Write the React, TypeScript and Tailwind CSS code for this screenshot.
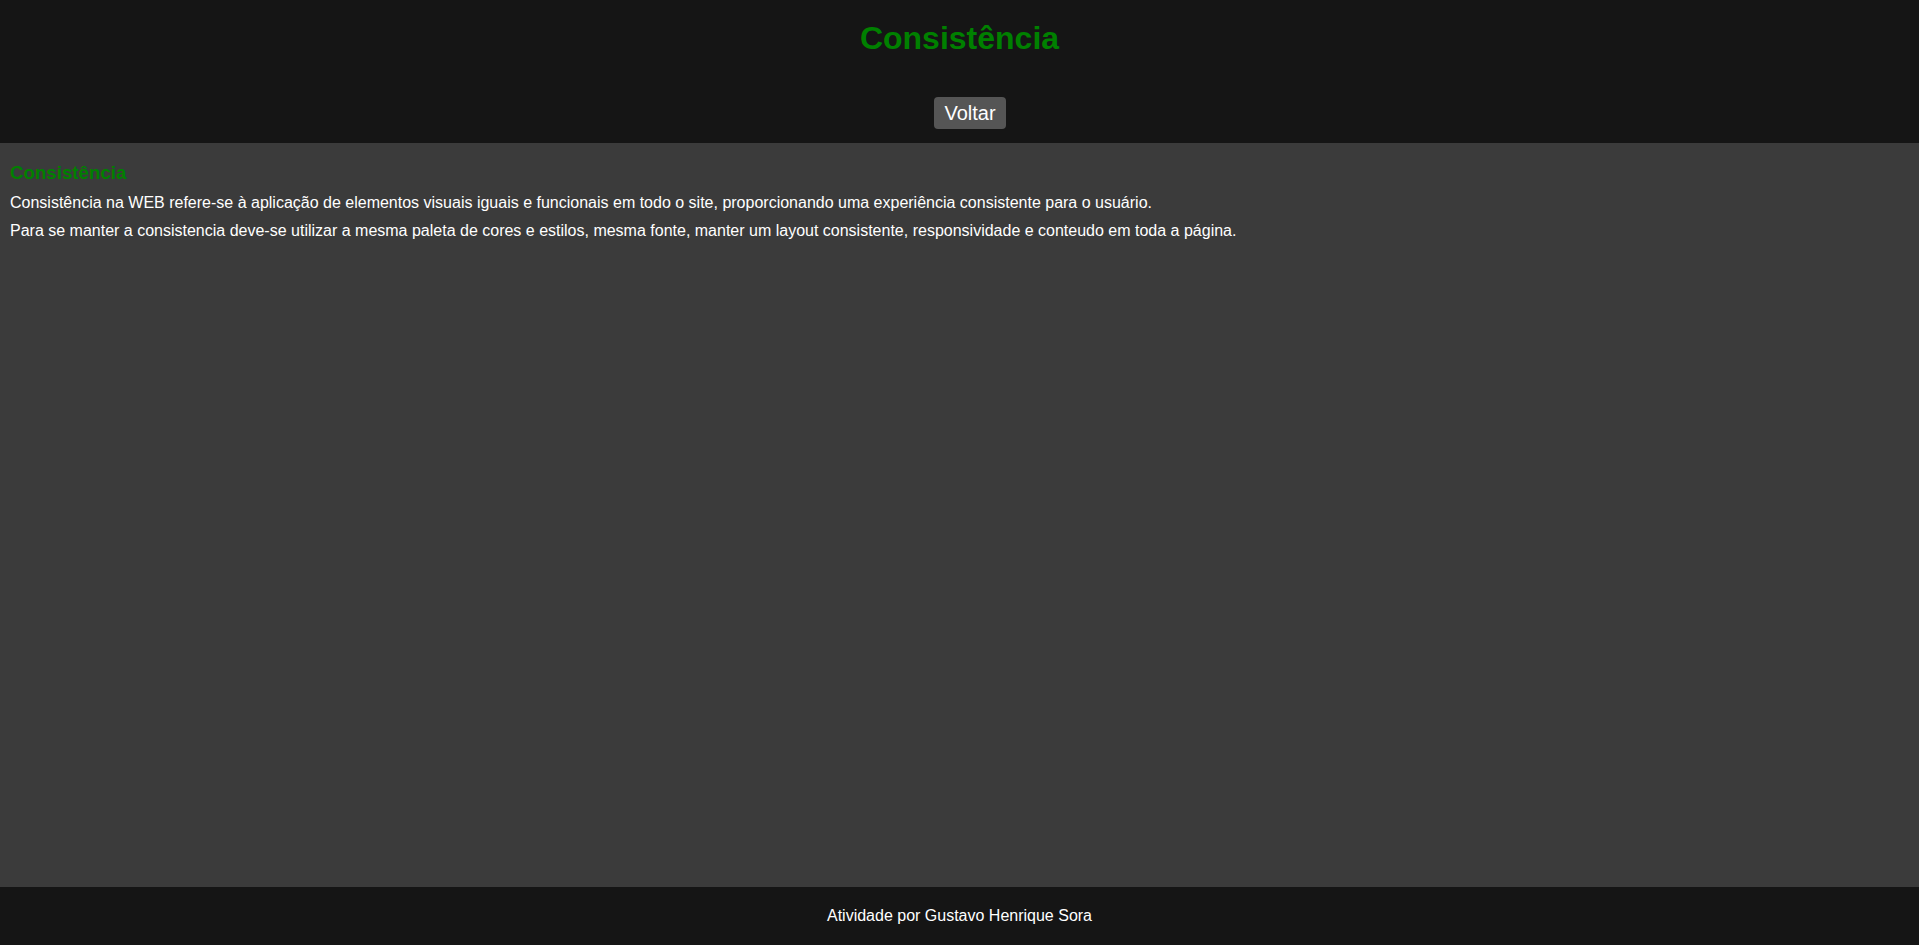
import React from 'react';

const font = { fontFamily: '"Liberation Sans", Arial, sans-serif' };

export default function App() {
  return (
    <div className="flex min-h-screen flex-col bg-[#3b3b3b] text-white" style={font}>
      <header className="flex h-[143px] flex-col items-center bg-[#151515] pt-[20px]">
        <h1 className="text-[32px] font-bold leading-[37px] text-[#008000]">Consistência</h1>
        <button className="ml-[21px] mt-[40px] rounded-[4px] bg-[#555555] px-[10px] py-[5px] text-[20px] leading-[22px] text-white">
          Voltar
        </button>
      </header>

      <main className="flex flex-1 flex-col gap-[10px] px-[10px] pt-[19px]">
        <h3 className="text-[18.72px] font-bold leading-[21.5px] text-[#008000]">Consistência</h3>
        <p className="text-[16px] leading-[18.4px]">
          Consistência na WEB refere-se à aplicação de elementos visuais iguais e funcionais em todo o site, proporcionando uma experiência consistente para o usuário.
        </p>
        <p className="text-[16px] leading-[18.4px]">
          Para se manter a consistencia deve-se utilizar a mesma paleta de cores e estilos, mesma fonte, manter um layout consistente, responsividade e conteudo em toda a página.
        </p>
      </main>

      <footer className="flex h-[58px] items-center justify-center bg-[#151515] text-[16px]">
        Atividade por Gustavo Henrique Sora
      </footer>
    </div>
  );
}
